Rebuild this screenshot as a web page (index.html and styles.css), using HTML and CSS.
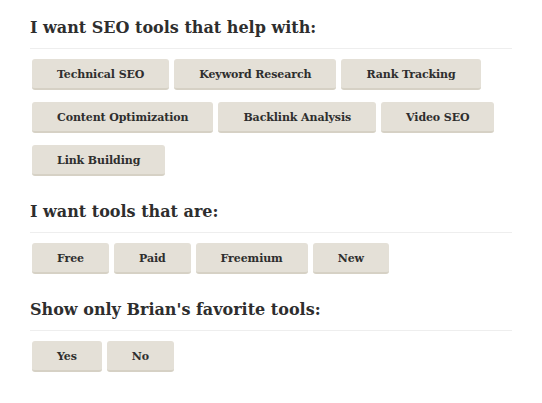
FILE: index.html
```html
<!DOCTYPE html>
<html lang="en">
<head>
<meta charset="utf-8">
<title>SEO tool filters</title>
<link rel="stylesheet" href="styles.css">
</head>
<body>
<div class="filters">
  <section class="group">
    <h2 class="group-title">I want SEO tools that help with:</h2>
    <div class="options">
      <button class="opt">Technical SEO</button>
      <button class="opt">Keyword Research</button>
      <button class="opt">Rank Tracking</button>
      <button class="opt">Content Optimization</button>
      <button class="opt">Backlink Analysis</button>
      <button class="opt">Video SEO</button>
      <button class="opt">Link Building</button>
    </div>
  </section>
  <section class="group">
    <h2 class="group-title">I want tools that are:</h2>
    <div class="options">
      <button class="opt">Free</button>
      <button class="opt">Paid</button>
      <button class="opt">Freemium</button>
      <button class="opt">New</button>
    </div>
  </section>
  <section class="group">
    <h2 class="group-title">Show only Brian's favorite tools:</h2>
    <div class="options">
      <button class="opt">Yes</button>
      <button class="opt">No</button>
    </div>
  </section>
</div>
</body>
</html>
```
FILE: styles.css
```css
html, body {
  margin: 0;
  padding: 0;
  background: #ffffff;
}

body {
  font-family: Georgia, "DejaVu Serif", serif;
  color: #333333;
}

.filters {
  width: 482px;
  padding: 18px 0 0 30px;
  display: flex;
  flex-direction: column;
  gap: 26px;
}

.group-title {
  margin: 0 0 10px 0;
  padding: 0 0 10px 0;
  font-size: 16px;
  line-height: 20px;
  font-weight: bold;
  color: #2e2e2e;
  border-bottom: 1px solid #eeeeee;
}

.options {
  display: flex;
  flex-wrap: wrap;
  gap: 12px 5px;
  padding-left: 2px;
}

.opt {
  font-family: Georgia, "DejaVu Serif", serif;
  font-size: 11px;
  font-weight: bold;
  letter-spacing: -0.1px;
  color: #2e2e2e;
  background: #e4e0d7;
  border: 0;
  border-bottom: 2px solid #d6d1c5;
  border-radius: 3px;
  height: 31px;
  padding: 2px 25px 0 25px;
  line-height: 27px;
  cursor: pointer;
}
```
